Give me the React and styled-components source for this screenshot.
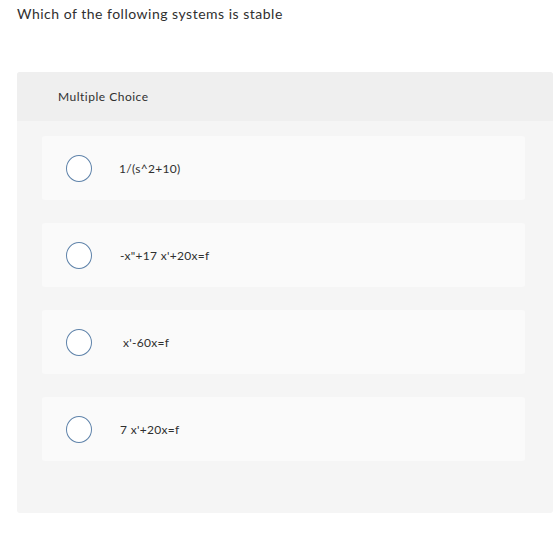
import React from 'react'
import styled, { createGlobalStyle } from 'styled-components'

const GlobalStyle = createGlobalStyle`
  body {
    margin: 0;
    background: #fff;
    font-family: Lato, "Open Sans", sans-serif;
    color: #333;
  }
`

const Page = styled.div`
  padding: 6px 7px 0 17px;
`

const Question = styled.p`
  margin: 0;
  font-size: 14px;
  line-height: 16px;
  letter-spacing: 0.5px;
  color: #2f2f2f;
`

const Panel = styled.section`
  margin-top: 50px;
  width: 536px;
  background: #f5f5f5;
  border-radius: 3px;
  padding-bottom: 52px;
`

const PanelHeader = styled.div`
  height: 49px;
  display: flex;
  align-items: center;
  padding-left: 41px;
  background: #efefef;
  border-radius: 3px 3px 0 0;
  font-size: 12px;
  letter-spacing: 0.5px;
  color: #2f2f2f;
`

const Choices = styled.div`
  display: flex;
  flex-direction: column;
  gap: 23px;
  padding: 15px 28px 0 25px;
`

const Choice = styled.label`
  height: 64px;
  display: flex;
  align-items: center;
  background: #fafafa;
  border-radius: 3px;
  padding-left: 24px;
  font-size: 12px;
  letter-spacing: 0.3px;
  color: #2f2f2f;
  cursor: pointer;
`

const Radio = styled.span`
  width: 24px;
  height: 25px;
  border: 1.5px solid #5f83aa;
  border-radius: 50%;
  background: #fff;
  flex: none;
  margin-right: ${p => p.$gap}px;
`

const options = [
  { text: '1/(s^2+10)', gap: 27 },
  { text: '-x"+17 x\'+20x=f', gap: 28 },
  { text: "x'-60x=f", gap: 31 },
  { text: "7 x'+20x=f", gap: 28 },
]

export default function App() {
  return (
    <>
      <GlobalStyle />
      <Page>
        <Question>Which of the following systems is stable</Question>
        <Panel>
          <PanelHeader>Multiple Choice</PanelHeader>
          <Choices>
            {options.map(o => (
              <Choice key={o.text}>
                <Radio $gap={o.gap} />
                {o.text}
              </Choice>
            ))}
          </Choices>
        </Panel>
      </Page>
    </>
  )
}
